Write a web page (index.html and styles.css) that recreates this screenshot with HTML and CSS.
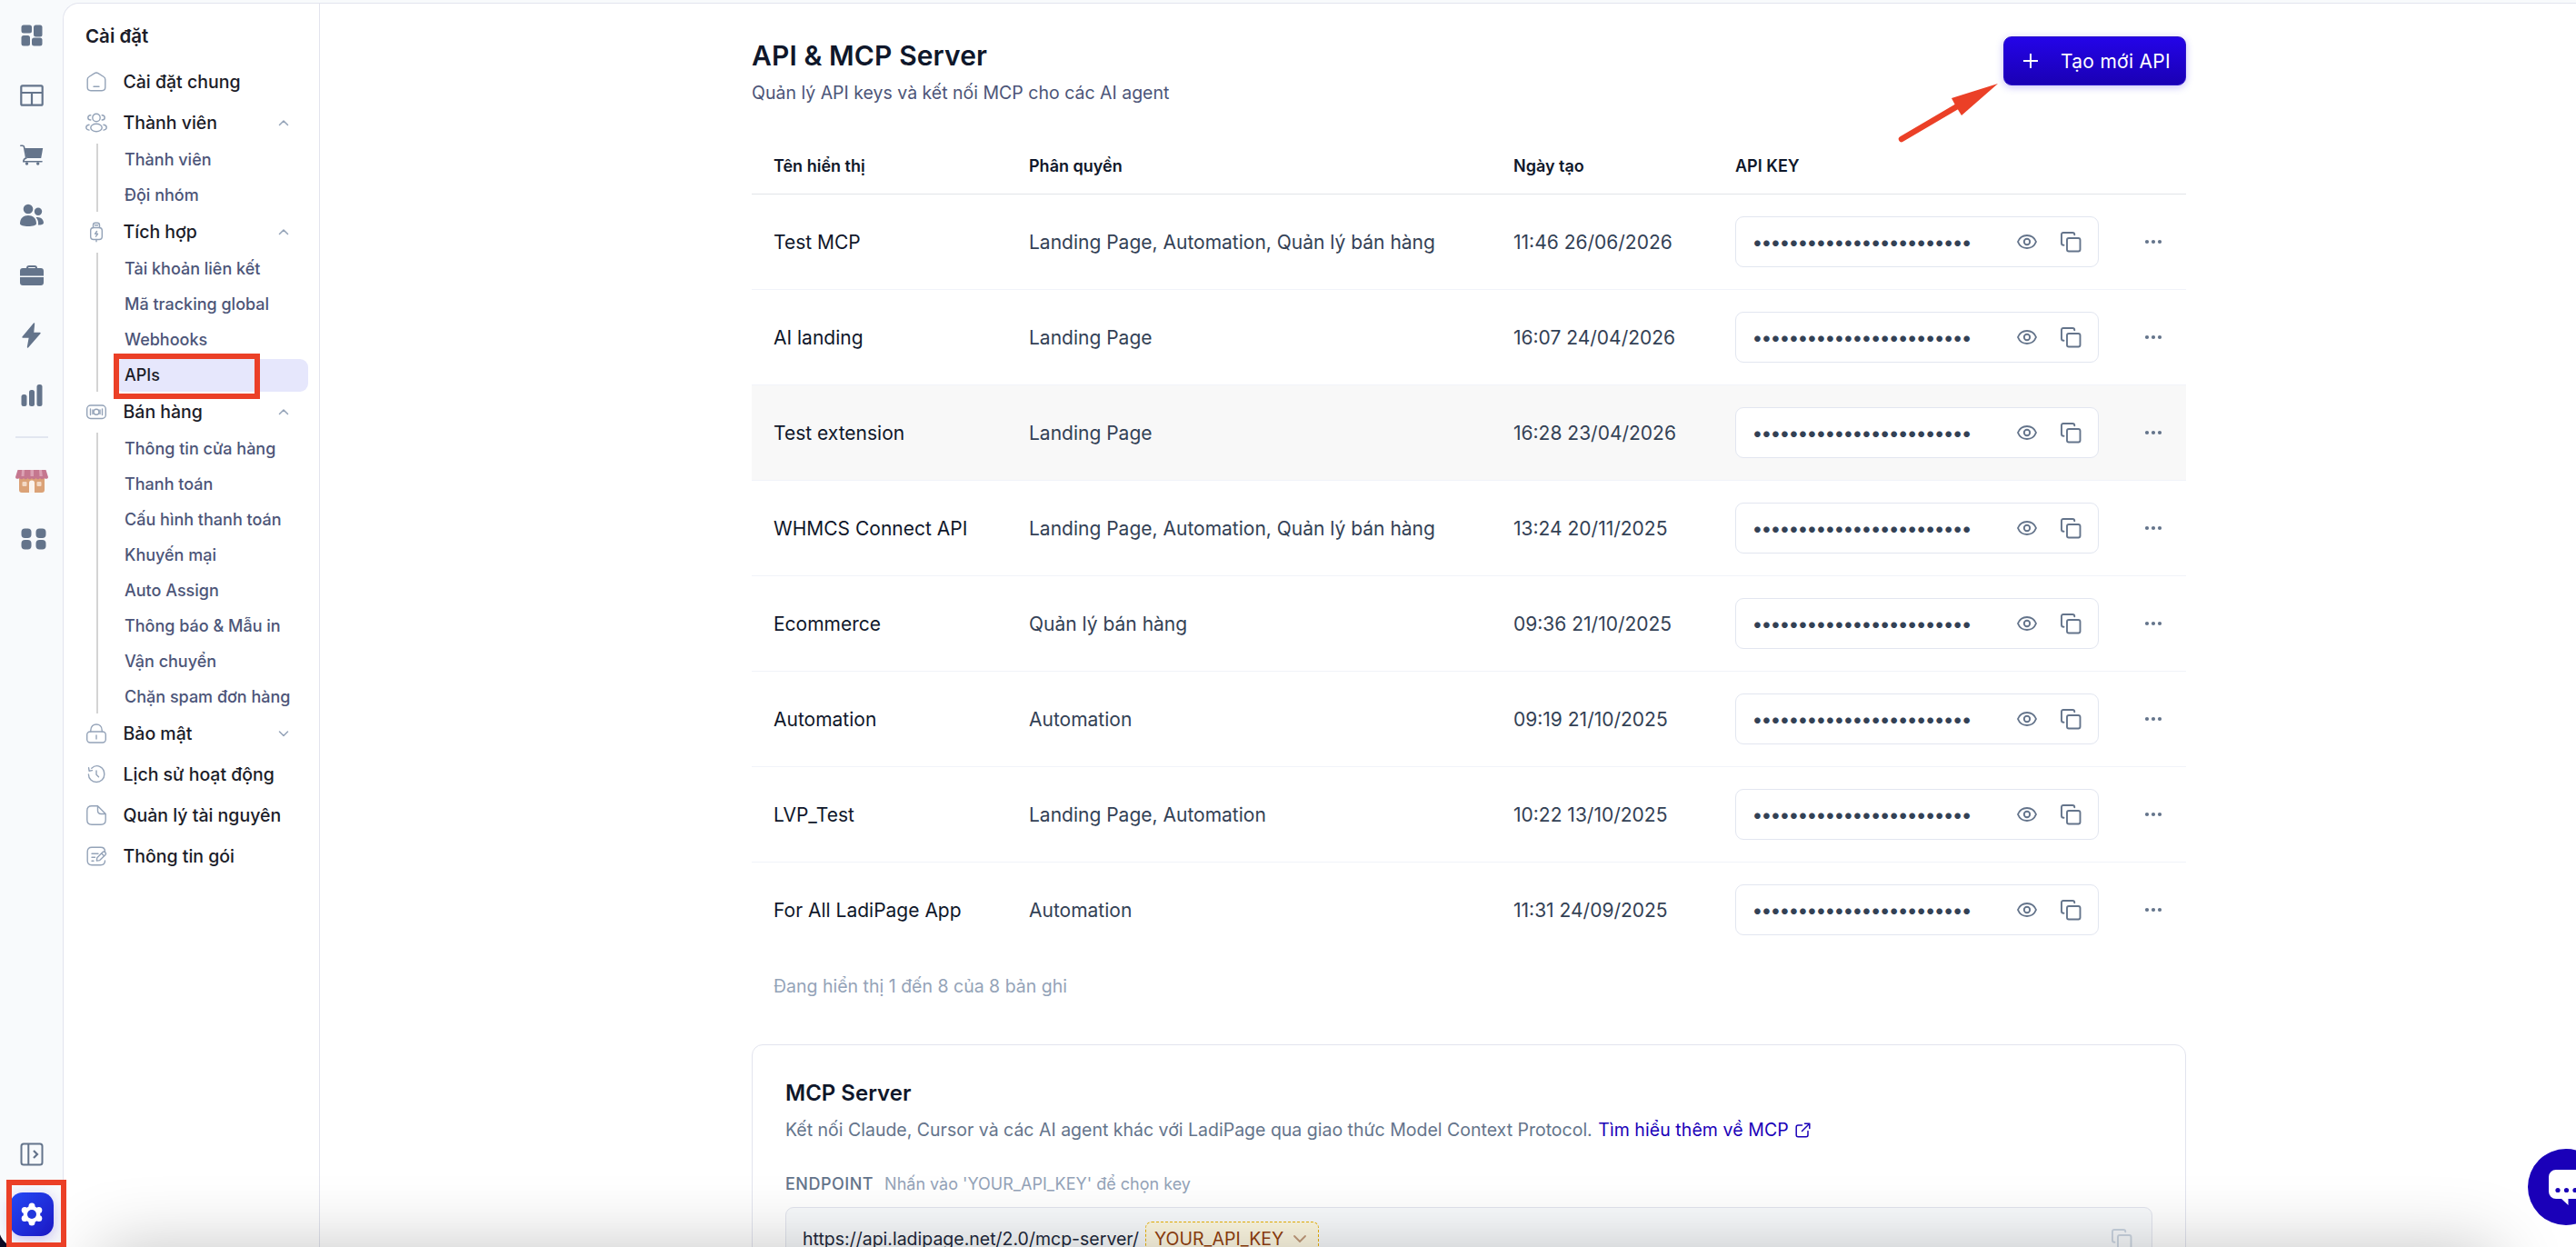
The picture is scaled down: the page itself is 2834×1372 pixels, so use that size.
FILE: index.html
```
<!DOCTYPE html>
<html lang="vi">
<head>
<meta charset="UTF-8">
<meta name="viewport" content="width=device-width, initial-scale=1.0">
<title>API &amp; MCP Server</title>
<link rel="stylesheet" href="styles.css">
</head>
<body>

<svg class="sprite" width="0" height="0">
    <symbol id="i-up" viewBox="0 0 16 16"><path d="M3.5 10.5 8 6l4.5 4.5" fill="none" stroke="currentColor" stroke-width="1.5" stroke-linecap="round" stroke-linejoin="round"/></symbol>
    <symbol id="i-down" viewBox="0 0 16 16"><path d="M3.5 6 8 10.5 12.5 6" fill="none" stroke="currentColor" stroke-width="1.5" stroke-linecap="round" stroke-linejoin="round"/></symbol>
    <symbol id="i-eye" viewBox="0 0 24 24"><path d="M2 12C4 7 8 5 12 5s8 2 10 7C20 17 16 19 12 19S4 17 2 12Z" fill="none" stroke="currentColor" stroke-width="1.9" stroke-linejoin="round"/><circle cx="12" cy="12" r="3.2" fill="none" stroke="currentColor" stroke-width="1.9"/></symbol>
    <symbol id="i-copy" viewBox="0 0 24 24"><rect x="8" y="8" width="14.500" height="14.500" rx="2" fill="none" stroke="currentColor" stroke-width="1.9"/><path d="M4.5 15.8C3 15.800 2 15 2 13.500V4c0-1.300.8-2 2-2h10c1.500 0 2.300.9 2.300 2.300" fill="none" stroke="currentColor" stroke-width="1.9" stroke-linecap="round"/></symbol>
    <symbol id="i-more" viewBox="0 0 24 24"><circle cx="5" cy="12" r="2.100"/><circle cx="12" cy="12" r="2.100"/><circle cx="19" cy="12" r="2.100"/></symbol>
</svg>

<div class="app">
    <nav class="rail">
        <a class="rail-item"><svg width="24" height="24" viewBox="0 0 24 24" fill="currentColor"><rect x=".5" y=".5" width="11.500" height="9" rx="2.500"/><rect x="14" y=".5" width="9.500" height="13" rx="2.500"/><rect x=".5" y="12" width="9.500" height="11.500" rx="2.500"/><rect x="12" y="14.500" width="11.500" height="9" rx="2.500"/></svg></a>
        <a class="rail-item"><svg width="26" height="24" viewBox="0 0 26 24" fill="none" stroke="currentColor" stroke-width="2.200"><rect x="1.300" y="1.300" width="23.400" height="21.400" rx="1.500"/><path d="M1 9h24M13 9v14"/></svg></a>
        <a class="rail-item"><svg width="26" height="24" viewBox="0 0 26 24"><path d="M5 4h20.200l-2 11H7.500Z" fill="currentColor"/><path d="M.8 1.200h2c1 0 1.500.5 1.700 1.500L6.800 15c-2 .5-3 1.700-3 3.800H24" fill="none" stroke="currentColor" stroke-width="1.600" stroke-linecap="round"/><circle cx="7.500" cy="21" r="1.700" fill="currentColor"/><circle cx="19.700" cy="21" r="1.700" fill="currentColor"/></svg></a>
        <a class="rail-item"><svg width="26" height="26" viewBox="0 0 26 26" fill="currentColor"><circle cx="9" cy="6" r="5.300"/><path d="M0 22c0-6 4-9 9-9s9 3 9 9c0 2-4 3-9 3s-9-1-9-3Z"/><circle cx="20" cy="8.800" r="4.200"/><path d="M17.500 15.200c4.500-1.200 8.500 2 8.500 6 0 1.500-2.500 2.300-6 2.300 .5-3-.3-6.200-2.500-8.300Z"/></svg></a>
        <a class="rail-item"><svg width="26" height="22" viewBox="0 0 26 22"><path d="M0 11.500V6c0-1.800 1.200-3 3-3h20c1.800 0 3 1.200 3 3v5.500ZM0 13h26v6c0 1.800-1.200 3-3 3H3c-1.800 0-3-1.200-3-3Z" fill="currentColor"/><path d="M8 4V3c0-1.200.8-2 2-2h6c1.200 0 2 .8 2 2v1" fill="none" stroke="currentColor" stroke-width="2"/></svg></a>
        <a class="rail-item"><svg width="22" height="28" viewBox="0 0 22 28"><path d="M13.500 1 1 16h7.500L6.500 27 20 11.500h-7.500Z" fill="currentColor" stroke="currentColor" stroke-width="1.400" stroke-linejoin="round"/></svg></a>
        <a class="rail-item"><svg width="24" height="26" viewBox="0 0 24 26" fill="currentColor"><rect x=".5" y="12" width="6" height="13" rx="2.500"/><rect x="9" y="7" width="6" height="18" rx="2.500"/><rect x="17.500" y="1" width="6" height="24" rx="2.500"/></svg></a>
        <hr class="rail-line">
        <a class="rail-item small"><svg width="36" height="26" viewBox="0 0 36 26"><path d="M4 8h28v14a3 3 0 0 1-3 3H7a3 3 0 0 1-3-3Z" fill="#dba277"/><path d="M2.500 0h31L36 8c0 2-3.500 2.600-4.500.8-1 2-3.500 2-4.500 0-1 2-3.500 2-4.500 0-1 2-3.500 2-4.500 0-1 2-3.500 2-4.500 0-1 2-3.500 2-4.500 0-1 2-3.500 2-4.500 0C3.500 10.600 0 10 0 8Z" fill="#c5778f"/><path d="M7 0h3l-.5 7h-3ZM16.500 0h3.500v7h-3.500ZM26 0h3l.8 7h-3.300Z" fill="#dba1b3"/><path d="M15 25V14.500a3 3 0 0 1 6 0V25Z" fill="#fbf4ef"/><rect x="7.500" y="13" width="5" height="5" rx="1" fill="#f3d9c5"/><rect x="23.500" y="13" width="5" height="5" rx="1" fill="#f3d9c5"/></svg></a>
        <a class="rail-item small apps"><svg width="28" height="24" viewBox="0 0 28 24" fill="currentColor"><rect x=".5" y=".5" width="11" height="10.500" rx="4"/><rect x="16.500" y=".5" width="11" height="10.500" rx="4"/><rect x=".5" y="13" width="11" height="10.500" rx="4"/><rect x="16.500" y="13" width="11" height="10.500" rx="4"/></svg></a>
        <div class="rail-bottom">
            <a class="rail-item"><svg width="26" height="26" viewBox="0 0 26 26" fill="none" stroke="currentColor" stroke-width="2"><rect x="1.500" y="1.500" width="23" height="23" rx="2.500"/><path d="M9.300 1.500v23"/><path d="m15 9 4 4-4 4" stroke-width="2.200"/></svg></a>
            <a class="rail-item"><span class="gear"><svg width="24" height="26" viewBox="0 0 24 26"><g fill="#fff"><circle cx="12" cy="13" r="9.300"/><circle cx="12" cy="4" r="3.500"/><circle cx="12" cy="22" r="3.500"/><circle cx="4.200" cy="8.500" r="3.500"/><circle cx="19.800" cy="8.500" r="3.500"/><circle cx="4.200" cy="17.500" r="3.500"/><circle cx="19.800" cy="17.500" r="3.500"/></g><circle cx="12" cy="13" r="5" fill="#2137dc"/></svg></span></a>
        </div>
    </nav>

    <div class="workspace">
        <aside class="sidebar">
            <h2 class="sidebar-title">Cài đặt</h2>
            <a class="menu-row"><svg class="menu-icon" viewBox="0 0 24 24"><path d="M2.200 9.500c0-1.500.5-2.300 1.700-3L10 2.600c1.300-.8 2.700-.8 4 0l6.100 3.900c1.200.7 1.700 1.500 1.700 3V18c0 2.500-1.300 3.700-3.700 3.700H5.900c-2.400 0-3.700-1.200-3.700-3.700ZM9 17.300h6"/></svg><span>Cài đặt chung</span></a>
            <a class="menu-row"><svg class="menu-icon" viewBox="0 0 24 24"><circle cx="12" cy="6.500" r="4.200"/><ellipse cx="12" cy="17.500" rx="6.200" ry="4.200"/><path d="M5.800 3.800c-4 .2-4 5 0 5.200M18.200 3.800c4 .2 4 5 0 5.200M4 14.300c-4.300.8-4.300 5 0 5.800M20 14.300c4.300.8 4.300 5 0 5.800"/></svg><span>Thành viên</span><svg class="chevron"><use href="#i-up"/></svg></a>
            <div class="submenu">
                <a class="sub-row">Thành viên</a>
                <a class="sub-row">Đội nhóm</a>
            </div>
            <a class="menu-row"><svg class="menu-icon" viewBox="0 0 24 24"><rect x="5.700" y="7.500" width="12.600" height="13" rx="3.200"/><path d="M8.500 7.500V4.700c0-1.700.8-2.500 2.200-2.500h2.600c1.400 0 2.200.8 2.200 2.500v2.800M10.500 4.800h3M12 20.500v2.300M12.500 11.500l-2 2.800h3l-2 2.800"/></svg><span>Tích hợp</span><svg class="chevron"><use href="#i-up"/></svg></a>
            <div class="submenu">
                <a class="sub-row">Tài khoản liên kết</a>
                <a class="sub-row">Mã tracking global</a>
                <a class="sub-row">Webhooks</a>
                <a class="sub-row active">APIs<i class="mark mark-api"></i></a>
            </div>
            <a class="menu-row"><svg class="menu-icon" viewBox="0 0 24 24"><rect x="1.700" y="5" width="20.600" height="14.500" rx="4"/><circle cx="12" cy="12.200" r="3"/><path d="M5.500 9v6.500M8 10v4.500M16 10v4.500M18.500 9v6.500"/></svg><span>Bán hàng</span><svg class="chevron"><use href="#i-up"/></svg></a>
            <div class="submenu">
                <a class="sub-row">Thông tin cửa hàng</a>
                <a class="sub-row">Thanh toán</a>
                <a class="sub-row">Cấu hình thanh toán</a>
                <a class="sub-row">Khuyến mại</a>
                <a class="sub-row">Auto Assign</a>
                <a class="sub-row">Thông báo &amp; Mẫu in</a>
                <a class="sub-row">Vận chuyển</a>
                <a class="sub-row">Chặn spam đơn hàng</a>
            </div>
            <a class="menu-row"><svg class="menu-icon" viewBox="0 0 24 24"><rect x="1.700" y="10" width="20.600" height="12" rx="3.500"/><path d="M5.800 10V8.500c0-8.700 12.400-8.700 12.400 0V10M12 14v4"/></svg><span>Bảo mật</span><svg class="chevron"><use href="#i-down"/></svg></a>
            <a class="menu-row"><svg class="menu-icon" viewBox="0 0 24 24"><path d="M6.800 5.200C13-.5 20.800 4.500 20.800 12c0 4.800-3.800 8.500-8.700 8.500S3.400 16.800 3.400 12M3.600 4.800l.5 3.400 3.400-.6M12 8v4.300l2.500 2.500"/></svg><span>Lịch sử hoạt động</span></a>
            <a class="menu-row"><svg class="menu-icon" viewBox="0 0 24 24"><path d="M13.500 1.800H7C3.500 1.800 1.800 3.500 1.800 7v10c0 3.500 1.700 5.200 5.200 5.200h10c3.500 0 5.200-1.700 5.200-5.200v-6.500ZM13.500 1.800v5c0 2.700 1 3.700 3.700 3.700h5"/></svg><span>Quản lý tài nguyên</span></a>
            <a class="menu-row"><svg class="menu-icon" viewBox="0 0 24 24"><path d="M21.500 7c0-3-1.500-4.700-4.700-4.700H7C3.800 2.300 2.200 4 2.200 7v10c0 3 1.600 4.700 4.800 4.700h9.800c3.200 0 4.700-1.700 4.700-4.700M7 9.300h7M7 13.300h3.500M7 17.300h2M12.300 17l.5-3.200 6.200-6.200c1.800-1.500 4.500 1 3 2.800l-6.300 6.200ZM17.800 9l2.700 2.700"/></svg><span>Thông tin gói</span></a>
        </aside>

        <main class="content">
            <header class="page-head">
                <div>
                    <h1 class="page-title">API &amp; MCP Server</h1>
                    <p class="page-desc">Quản lý API keys và kết nối MCP cho các AI agent</p>
                </div>
                <button class="btn-create"><svg width="16" height="16" viewBox="0 0 16 16"><path d="M8 0v16M0 8h16" stroke="#fff" stroke-width="2"/></svg><span>Tạo mới API</span></button>
                <svg class="mark-arrow" width="112" height="68" viewBox="0 0 112 68"><path d="M5 63 68 26" stroke="#eb4027" stroke-width="6.500" stroke-linecap="round"/><path d="M111 2 60 18l4.500 8.500L71 37Z" fill="#eb4027"/></svg>
            </header>

            <table class="api-table">
                <colgroup><col class="c-name"><col class="c-scope"><col class="c-date"><col class="c-key"><col></colgroup>
                <thead>
                    <tr><th>Tên hiển thị</th><th>Phân quyền</th><th>Ngày tạo</th><th>API KEY</th><th></th></tr>
                </thead>
                <tbody id="rows"></tbody>
            </table>
            <p class="table-note">Đang hiển thị 1 đến 8 của 8 bản ghi</p>

            <section class="mcp-card">
                <h3 class="mcp-title">MCP Server</h3>
                <p class="mcp-desc">Kết nối Claude, Cursor và các AI agent khác với LadiPage qua giao thức Model Context Protocol. <a class="mcp-link">Tìm hiểu thêm về MCP<svg width="17" height="17" viewBox="0 0 17 17" fill="none" stroke="currentColor" stroke-width="1.500" stroke-linecap="round" stroke-linejoin="round"><path d="M7.500 3H3.200C2 3 1.200 3.800 1.200 5v8.800c0 1.200.8 2 2 2H12c1.200 0 2-.8 2-2V9.500M10.500 1.200h5.300v5.300M15.500 1.500 7.500 9.500"/></svg></a></p>
                <div class="mcp-label"><b>ENDPOINT</b><span>Nhấn vào 'YOUR_API_KEY' để chọn key</span></div>
                <div class="endpoint">
                    <span>https://api.ladipage.net/2.0/mcp-server/</span>
                    <a class="key-pick"><span>YOUR_API_KEY</span><svg width="18" height="18" viewBox="0 0 18 18"><path d="m3 6 6 6 6-6" fill="none" stroke="#c29a7a" stroke-width="1.800" stroke-linecap="round" stroke-linejoin="round"/></svg></a>
                    <svg class="endpoint-copy"><use href="#i-copy"/></svg>
                </div>
            </section>
        </main>
    </div>
</div>

<div class="dock-shadow"></div>
<i class="corner"></i>
<i class="mark mark-gear"></i>
<div class="chat"><svg width="84" height="84" viewBox="0 0 84 84"><path d="M31 23h23a8 8 0 0 1 8 8v16a8 8 0 0 1-8 8h-9.500v7L37 55h-6a8 8 0 0 1-8-8V31a8 8 0 0 1 8-8Z" fill="#fff"/><g fill="#1a00b8"><circle cx="33" cy="45.500" r="2.600"/><circle cx="42.500" cy="45.500" r="2.600"/><circle cx="52" cy="45.500" r="2.600"/></g></svg></div>

<script>
    const keys = [
        ["Test MCP", "Landing Page, Automation, Quản lý bán hàng", "11:46 26/06/2026"],
        ["AI landing", "Landing Page", "16:07 24/04/2026"],
        ["Test extension", "Landing Page", "16:28 23/04/2026"],
        ["WHMCS Connect API", "Landing Page, Automation, Quản lý bán hàng", "13:24 20/11/2025"],
        ["Ecommerce", "Quản lý bán hàng", "09:36 21/10/2025"],
        ["Automation", "Automation", "09:19 21/10/2025"],
        ["LVP_Test", "Landing Page, Automation", "10:22 13/10/2025"],
        ["For All LadiPage App", "Automation", "11:31 24/09/2025"]
    ];

    document.getElementById("rows").innerHTML = keys.map((k, i) => `
        <tr class="${i === 2 ? "hover" : ""}">
            <td class="name">${k[0]}</td>
            <td>${k[1]}</td>
            <td>${k[2]}</td>
            <td>
                <div class="key-box">
                    <span class="dots">${"•".repeat(24)}</span>
                    <svg class="key-icon eye"><use href="#i-eye"/></svg>
                    <svg class="key-icon"><use href="#i-copy"/></svg>
                </div>
            </td>
            <td class="more"><svg><use href="#i-more"/></svg></td>
        </tr>`).join("");
</script>

</body>
</html>
```
FILE: styles.css
```
* {
    box-sizing: border-box;
}
html {
    overflow: hidden;
}
body {
    margin: 0;
    height: 1372px;
    overflow: hidden;
    position: relative;
    font-family: Inter, "Liberation Sans", sans-serif;
    color: #0f172a;
    background: #f8fafc;
}
h1, h2, h3, p {
    margin: 0;
}
.sprite {
    position: absolute;
}
.app {
    display: flex;
    height: 1372px;
    overflow: hidden;
}

/* icon rail */
.rail {
    width: 69px;
    flex: none;
    display: flex;
    flex-direction: column;
    padding: 6px 0 3px;
    color: #64748b;
}
.rail-item {
    height: 66px;
    display: flex;
    align-items: center;
    justify-content: center;
    padding-left: 1px;
}
.rail-item.small {
    height: 63px;
}
.rail-item.apps {
    padding-left: 5px;
}
.rail-line {
    width: 36px;
    height: 2px;
    margin: 12px 16px 16px 17px;
    border: 0;
    background: #e2e6f0;
}
.rail-bottom {
    margin-top: auto;
}
.gear {
    width: 48px;
    height: 48px;
    border-radius: 14px;
    display: flex;
    align-items: center;
    justify-content: center;
    background: linear-gradient(135deg, #2449f5, #1c18c4);
    box-shadow: 0 4px 16px rgba(60, 20, 200, .25);
}

.workspace {
    flex: 1;
    display: flex;
    margin-top: 3px;
    border-top: 1px solid #e2e4ee;
    border-left: 1px solid #e2e4ee;
    border-radius: 18px 0 0 0;
    background: #fff;
}

/* settings menu */
.sidebar {
    width: 282px;
    flex: none;
    padding: 0 12px 0 24px;
    border-right: 1px solid #e2e4ee;
}
.sidebar-title {
    height: 63.5px;
    padding: 21px 0 0;
    font-size: 20.5px;
    line-height: 30px;
    font-weight: 600;
    color: #1b1c28;
}
.menu-row {
    height: 45px;
    display: flex;
    align-items: center;
    padding-right: 19px;
    font-size: 19.5px;
    font-weight: 500;
    color: #1b1c28;
}
.menu-icon {
    width: 24px;
    height: 24px;
    margin-right: 17.5px;
    fill: none;
    stroke: #94a3b8;
    stroke-width: 1.4;
    stroke-linecap: round;
    stroke-linejoin: round;
}
.chevron {
    width: 16px;
    height: 16px;
    margin-left: auto;
    color: #94a3b8;
}
.submenu {
    margin-left: 12px;
    padding-left: 18px;
    border-left: 2px solid #d4d4d4;
    display: flex;
    flex-direction: column;
    gap: 3px;
}
.sub-row {
    position: relative;
    height: 36px;
    padding-left: 11px;
    border-radius: 9px;
    font-size: 18px;
    line-height: 36px;
    font-weight: 500;
    color: #4c5578;
}
.sub-row.active {
    background: #e6e7fc;
    color: #1b1c28;
}
.mark {
    position: absolute;
    border: 6px solid #eb4027;
}
.mark-api {
    left: -1px;
    top: -6px;
    width: 161px;
    height: 50px;
}
.mark-gear {
    left: 7px;
    top: 1298px;
    width: 66px;
    height: 75px;
}

/* page */
.content {
    width: 1578px;
    margin-left: 475px;
    padding-top: 36px;
}
.page-head {
    position: relative;
    display: flex;
    justify-content: space-between;
    align-items: flex-start;
    height: 112px;
}
.page-title {
    font-size: 30px;
    line-height: 42px;
    font-weight: 600;
    letter-spacing: .1px;
}
.page-desc {
    margin-top: 5px;
    font-size: 19.5px;
    line-height: 30px;
    color: #4c5578;
}
.btn-create {
    width: 201px;
    height: 54px;
    display: flex;
    align-items: center;
    gap: 25px;
    padding: 0 0 0 21px;
    border: 1px solid #2d14c8;
    border-radius: 9px;
    background: linear-gradient(#2404e8, #1a00b4);
    box-shadow: 0 2px 8px rgba(36, 4, 232, .25);
    font: 400 21px Inter, sans-serif;
    letter-spacing: .28px;
    white-space: nowrap;
    color: #fff;
}
.mark-arrow {
    position: absolute;
    left: 1260px;
    top: 50px;
    fill: none;
}
.api-table {
    width: 100%;
    table-layout: fixed;
    border-collapse: separate;
    border-spacing: 0;
}
.c-name { width: 281px; }
.c-scope { width: 533px; }
.c-date { width: 244px; }
.c-key { width: 448px; }
.api-table th {
    height: 62px;
    padding: 0 24px;
    border-bottom: 1px solid #e2e4e8;
    font-size: 18px;
    font-weight: 600;
    text-align: left;
}
.api-table td {
    height: 105px;
    padding: 0 24px;
    border-bottom: 1px solid #f1f3f9;
    font-size: 21px;
    color: #334155;
    white-space: nowrap;
}
.api-table td.name {
    color: #0f172a;
}
.api-table tr:last-child td {
    border-bottom-color: transparent;
}
.api-table .hover td {
    background: #f8f8f8;
}
.key-box {
    width: 400px;
    height: 56px;
    display: flex;
    align-items: center;
    padding: 0 18px 0 17.6px;
    border: 1px solid #e2e6f0;
    border-radius: 9px;
    background: #fff;
}
.dots {
    letter-spacing: -1.81px;
}
.key-icon {
    width: 24px;
    height: 24px;
    margin-left: 24px;
    color: #64748b;
}
.key-icon.eye {
    margin-left: auto;
}
.more svg {
    width: 24px;
    height: 24px;
    display: block;
    fill: #64748b;
}
.table-note {
    padding: 16px 24px 0;
    font-size: 19.5px;
    line-height: 30px;
    color: #94a3b8;
}

.mcp-card {
    height: 400px;
    margin-top: 49px;
    padding: 36px;
    border: 1px solid #e2e4ee;
    border-radius: 12px;
}
.mcp-title {
    font-size: 24px;
    line-height: 34px;
    font-weight: 600;
}
.mcp-desc {
    margin-top: 8px;
    font-size: 19.5px;
    line-height: 30px;
    color: #64748b;
}
.mcp-link {
    margin-left: 1px;
    letter-spacing: .07px;
    color: #1a00b8;
}
.mcp-link svg {
    margin-left: 7px;
    vertical-align: -2px;
}
.mcp-label {
    display: flex;
    gap: 12px;
    margin: 30px 0 10px;
    font-size: 18px;
    line-height: 30px;
    color: #94a3b8;
}
.mcp-label b {
    font-weight: 500;
    letter-spacing: .5px;
    color: #64748b;
}
.endpoint {
    height: 70px;
    display: flex;
    align-items: center;
    padding: 0 21px 0 18px;
    border: 1px solid #e2e4ee;
    border-radius: 9px;
    background: #f8fafc;
    font-size: 19.5px;
    color: #1e293b;
}
.key-pick {
    height: 38px;
    display: flex;
    align-items: center;
    gap: 9px;
    margin-left: 7px;
    padding: 0 11px 0 9px;
    border: 1px dashed #eab308;
    border-radius: 7px;
    background: #fef9e3;
    color: #92400e;
}
.endpoint-copy {
    width: 24px;
    height: 24px;
    margin-left: auto;
    color: #cbd5e1;
}

/* overlays */
.dock-shadow {
    position: absolute;
    left: 110px;
    right: 90px;
    top: 1374px;
    height: 200px;
    box-shadow: 0 0 80px rgba(0, 0, 0, .24);
}
.corner {
    position: absolute;
    left: 0;
    bottom: 0;
    width: 22px;
    height: 22px;
    background: radial-gradient(circle at 100% 0, transparent 23px, #0d0a24 24px);
}
.chat {
    position: absolute;
    left: 2781px;
    top: 1264px;
    width: 84px;
    height: 84px;
    border-radius: 50%;
    background: #1a00b8;
}
```
